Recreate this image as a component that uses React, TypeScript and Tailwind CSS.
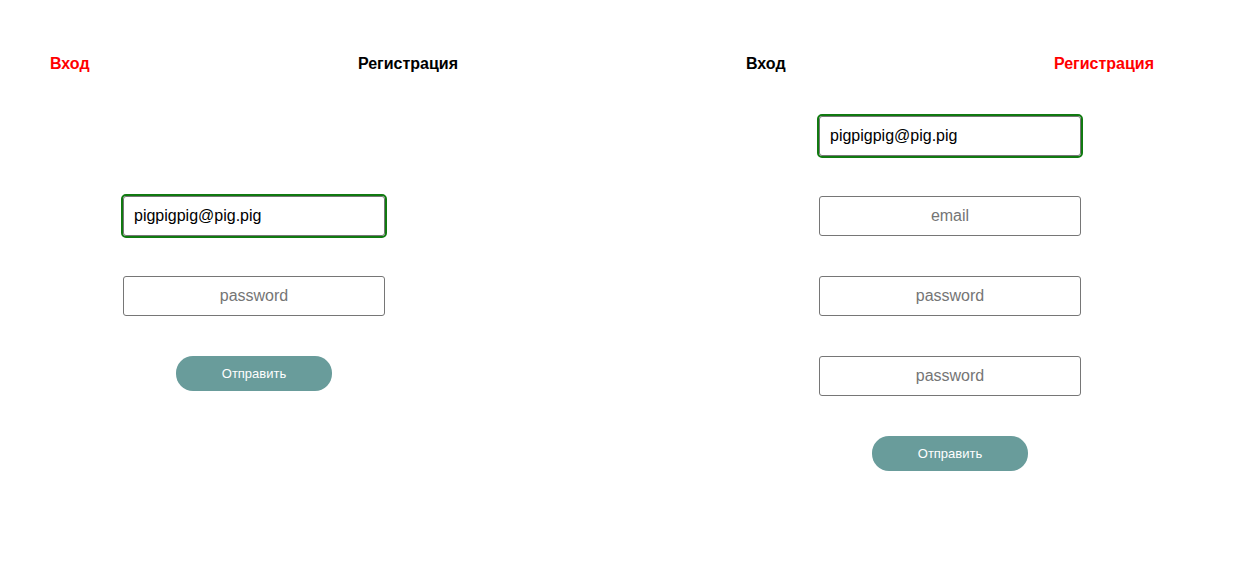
import { useState } from "react";

const font = { fontFamily: '"Liberation Sans", Arial, sans-serif' };

function Field({
  placeholder,
  value,
  active,
}: {
  placeholder: string;
  value?: string;
  active?: boolean;
}) {
  const [text, setText] = useState(value ?? "");
  return (
    <input
      value={text}
      onChange={(e) => setText(e.target.value)}
      placeholder={placeholder}
      className={
        "h-10 w-[262px] shrink-0 rounded-[3px] border border-[#767676] bg-white px-[10px] text-base text-black placeholder:text-center placeholder:text-[#757575] focus:outline-none " +
        (active
          ? "text-left outline-2 outline-offset-0 outline-[#107a10] outline-solid focus:outline-2 focus:outline-solid"
          : "text-center")
      }
    />
  );
}

function SubmitButton() {
  return (
    <button className="h-[35px] w-[156px] shrink-0 rounded-[17px] bg-[#699c9b] pt-[1px] text-[13px] text-white">
      Отправить
    </button>
  );
}

function Panel({ mode }: { mode: "login" | "register" }) {
  return (
    <div className="flex w-[508px] flex-col">
      {/* Tabs */}
      <div className="flex justify-between px-[50px] pt-[55px] text-base font-bold leading-[18px]">
        <span className={mode === "login" ? "text-[#ff0000]" : "text-black"}>
          Вход
        </span>
        <span className={mode === "register" ? "text-[#ff0000]" : "text-black"}>
          Регистрация
        </span>
      </div>

      {/* Form */}
      <div className="-mt-px flex h-[442px] flex-col items-center justify-center gap-10">
        {mode === "login" ? (
          <>
            <Field placeholder="email" value="pigpigpig@pig.pig" active />
            <Field placeholder="password" />
          </>
        ) : (
          <>
            <Field placeholder="login" value="pigpigpig@pig.pig" active />
            <Field placeholder="email" />
            <Field placeholder="password" />
            <Field placeholder="password" />
          </>
        )}
        <SubmitButton />
      </div>
    </div>
  );
}

export default function App() {
  return (
    <div className="flex h-[568px] w-full gap-[188px] bg-white" style={font}>
      <Panel mode="login" />
      <Panel mode="register" />
    </div>
  );
}
